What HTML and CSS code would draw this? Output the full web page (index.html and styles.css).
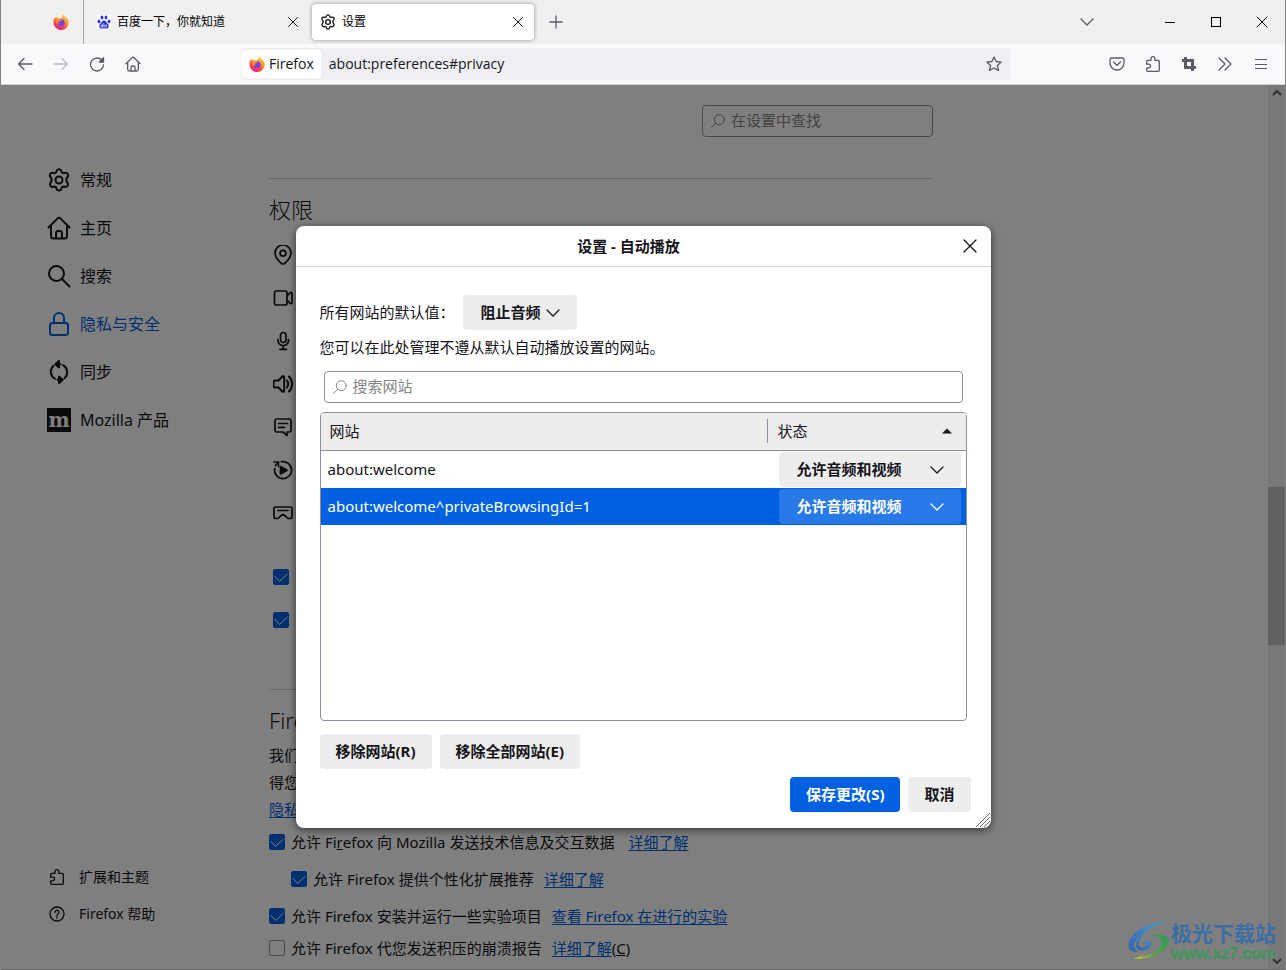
FILE: index.html
```html
<!DOCTYPE html>
<html lang="zh-CN">
<head>
<meta charset="utf-8">
<title>设置</title>
<link rel="stylesheet" href="styles.css">
</head>
<body>
<svg class="defs" aria-hidden="true">
  <defs>
    <linearGradient id="flame" x1="0.8" y1="0" x2="0.3" y2="1">
      <stop offset="0" stop-color="#ffe14a"/><stop offset="0.4" stop-color="#ff9a2b"/><stop offset="0.75" stop-color="#ff3d4d"/><stop offset="1" stop-color="#e31587"/>
    </linearGradient>
    <symbol id="firefox" viewBox="0 0 16 16">
      <path fill="url(#flame)" d="M10 .2c1.300.9 1.900 1.900 2.200 2.800C14.500 4 15.800 6.200 15.800 8.500A7.600 7.600 0 0 1 8.200 16 7.700 7.700 0 0 1 .4 8.300C.4 6.200 1 4.300 2.300 3l.3 1.200L4.200 3l.5 1.400 2.500.1C8.500 4 9.500 2.500 10 .2z"/>
      <path fill="#7542e5" d="M7.600 5.300c2.600-.4 4.300 1.500 4.200 3.600-.1 2.100-1.900 3.500-3.900 3.400-2-.1-3.500-1.600-3.500-3.300 1 .8 2.200.5 3-.1-1-.1-2-.7-2.200-1.500.9.100 1.600-.2 2.400-.8-.5-.3-.4-.9 0-1.300z"/>
      <path fill="#ff9328" d="M3 6c1-1 3-1.200 4.500-.5L8.700 6 7.500 7.200l-2 .4C4.500 8.500 4.500 10 5.200 11 3.500 10.200 2.500 8 3 6z"/>
    </symbol>
    <symbol id="gear" viewBox="0 0 24 24">
      <path d="M9.500 3.200a2.600 2.600 0 0 1 5 0l.4 1.200 1.500.8 1.300-.3a2.600 2.600 0 0 1 2.700 4.300L19.500 10.300v2.900l.9 1.400a2.600 2.600 0 0 1-2.700 4.200l-1.300-.2-1.500.8-.4 1.300a2.600 2.600 0 0 1-5 0l-.4-1.300-1.500-.8-1.300.2a2.600 2.600 0 0 1-2.700-4.200l.9-1.400v-2.900l-.9-1.100a2.600 2.600 0 0 1 2.700-4.300l1.300.3 1.500-.8z"/><circle cx="12" cy="12" r="3.500"/>
    </symbol>
    <symbol id="house" viewBox="0 0 24 24">
      <path d="M1.500 11.500 10.600 2.400a2 2 0 0 1 2.800 0l9.100 9.100M4 9.500V20a2.500 2.500 0 0 0 2.500 2.500h11A2.500 2.500 0 0 0 20 20V9.500M9 22.500V17a2 2 0 0 1 2-2h2a2 2 0 0 1 2 2v5.500"/>
    </symbol>
    <symbol id="puzzle" viewBox="0 0 16 16">
      <path d="M6 4.300V2.600a1.900 1.900 0 0 1 3.800 0v1.700h3.400a1.100 1.100 0 0 1 1.100 1.100v8.800a1.100 1.100 0 0 1-1.100 1.100H2.800a1.100 1.100 0 0 1-1.100-1.100v-2.400h2.100a1.800 1.800 0 0 0 0-3.600H1.700V5.400a1.100 1.100 0 0 1 1.100-1.100z"/>
    </symbol>
    <symbol id="cross" viewBox="0 0 12 12"><path d="m1.500 1.500 9 9m0-9-9 9"/></symbol>
    <symbol id="chevron" viewBox="0 0 14 14"><path d="m1 4 6 6 6-6"/></symbol>
    <symbol id="lens" viewBox="0 0 14 14"><circle cx="8.300" cy="5.700" r="5"/><path d="M4.700 9.300.7 13.300"/></symbol>
  </defs>
</svg>

<header class="tabs">
  <button class="pinned" aria-label="Firefox"><svg class="i16 plain"><use href="#firefox"/></svg></button>
  <div class="tab">
    <svg class="i14 plain" viewBox="0 0 14 14"><rect width="14" height="14" rx="2" fill="#fff"/><g fill="#2932e1"><ellipse cx="2" cy="6.400" rx="1.400" ry="1.900"/><ellipse cx="5" cy="2.600" rx="1.400" ry="2"/><ellipse cx="9" cy="2.600" rx="1.400" ry="2"/><ellipse cx="12" cy="6.400" rx="1.400" ry="1.900"/><path d="M7 5.600c2 0 2.300 2 3.700 3.200 1.800 1.600 1.100 4.800-1.100 4.800-1 0-1.600-.3-2.600-.3s-1.600.3-2.600.3c-2.200 0-2.900-3.200-1.100-4.800C4.700 7.600 5 5.600 7 5.600z"/></g><path stroke="#fff" stroke-width=".8" fill="none" d="M6 8.700v3.300H4.800a.8.8 0 0 1 0-1.700H6M7.700 10v1.500c0 .7 1.800.7 1.800 0V10"/></svg>
    <span class="tab-title">百度一下，你就知道</span>
    <button class="icon-btn" aria-label="关闭标签页"><svg class="i12"><use href="#cross"/></svg></button>
  </div>
  <div class="tab active">
    <svg class="i16 bold"><use href="#gear"/></svg>
    <span class="tab-title">设置</span>
    <button class="icon-btn" aria-label="关闭标签页"><svg class="i12"><use href="#cross"/></svg></button>
  </div>
  <button class="icon-btn new-tab" aria-label="新建标签页"><svg class="i14 muted" viewBox="0 0 14 14"><path d="M7 1v12M1 7h12"/></svg></button>
  <button class="icon-btn all-tabs" aria-label="列出所有标签页"><svg class="i14 muted"><use href="#chevron"/></svg></button>
  <div class="window-controls">
    <button aria-label="最小化"><svg class="i12 crisp" viewBox="0 0 12 12"><path d="M1 6.500h10"/></svg></button>
    <button aria-label="最大化"><svg class="i12 crisp" viewBox="0 0 12 12"><rect x="1.500" y="1.500" width="9" height="9"/></svg></button>
    <button aria-label="关闭"><svg class="i12" viewBox="0 0 12 12"><path d="m1 1 10 10M11 1 1 11"/></svg></button>
  </div>
</header>

<nav class="toolbar" aria-label="导航">
  <div class="nav-buttons">
    <button aria-label="后退"><svg class="i16" viewBox="0 0 16 16"><path d="M15 8H1.500M7 2.500 1.500 8 7 13.500"/></svg></button>
    <button aria-label="前进" disabled><svg class="i16" viewBox="0 0 16 16"><path d="M1 8h13.500M9 2.500 14.500 8 9 13.500"/></svg></button>
    <button aria-label="刷新"><svg class="i16" viewBox="0 0 16 16"><path d="M12.700 4A6.500 6.500 0 1 0 14.500 8.700"/><path class="solid" d="M14.500 1.800V6h-4.200z"/></svg></button>
    <button aria-label="主页"><svg class="i16 bold"><use href="#house"/></svg></button>
  </div>
  <div class="urlbar">
    <span class="identity"><svg class="i16 plain"><use href="#firefox"/></svg>Firefox</span>
    <input class="url" aria-label="地址" value="about:preferences#privacy">
    <button aria-label="添加书签"><svg class="i16" viewBox="0 0 16 16"><path d="m8 .9 2.100 4.600 5.100.6-3.800 3.400 1 5L8 12l-4.400 2.500 1-5L.8 6.100l5.100-.6z"/></svg></button>
  </div>
  <div class="tools">
    <button aria-label="Pocket"><svg class="i16" viewBox="0 0 16 16"><path d="M2.500 2h11a1.500 1.500 0 0 1 1.500 1.500V7A7 7 0 0 1 1 7V3.500A1.500 1.500 0 0 1 2.500 2zM4.500 6 8 9.300 11.500 6"/></svg></button>
    <button aria-label="扩展"><svg class="i16"><use href="#puzzle"/></svg></button>
    <button aria-label="截图"><svg class="i16 crop" viewBox="0 0 16 16"><path d="M1 4.500h10.500V15M4.500 1v10.500H15"/></svg></button>
    <button aria-label="更多工具"><svg class="i16" viewBox="0 0 16 16"><path d="m2 2 6 6-6 6M8 2l6 6-6 6"/></svg></button>
    <button aria-label="菜单"><svg class="i16 crisp" viewBox="0 0 16 16"><path d="M2 3.500h12M2 8.500h12M2 12.500h12"/></svg></button>
  </div>
</nav>

<div class="viewport">
  <div class="page">
    <aside class="sidebar">
      <a href="#general"><svg class="i24"><use href="#gear"/></svg>常规</a>
      <a href="#home"><svg class="i24"><use href="#house"/></svg>主页</a>
      <a href="#search"><svg class="i24" viewBox="0 0 24 24"><circle cx="9.500" cy="9.500" r="7.500"/><path d="m15 15 7.500 7.500"/></svg>搜索</a>
      <a href="#privacy" class="current"><svg class="i24" viewBox="0 0 24 24"><rect x="3" y="11" width="18" height="12" rx="2.500"/><path d="M7 11V6a5 5 0 0 1 10 0v5"/></svg>隐私与安全</a>
      <a href="#sync"><svg class="i24" viewBox="0 0 24 24"><path d="M6.500 5.800a8 8 0 0 0 1.500 13M17.500 18.200a8 8 0 0 0-1.500-13M12 4.200h1.500M12 19.800h-1.500"/><path class="solid" d="M12 1v6.400L8.300 4.200zM12 23v-6.400l3.700 3.200z"/></svg>同步</a>
      <a href="#more"><span class="moz" aria-hidden="true">m</span>Mozilla 产品</a>
      <div class="side-foot">
        <a href="#addons"><svg class="i16"><use href="#puzzle"/></svg>扩展和主题</a>
        <a href="#help"><svg class="i16" viewBox="0 0 16 16"><circle cx="8" cy="8" r="7"/><path d="M6 6.300a2 2 0 1 1 3 1.700c-.7.400-1 .7-1 1.500M8 11v1.200"/></svg>Firefox 帮助</a>
      </div>
    </aside>
    <main class="main">
      <label class="search pref-search"><svg class="i14"><use href="#lens"/></svg><input type="search" placeholder="在设置中查找" aria-label="在设置中查找"></label>
      <section class="group">
        <h2>权限</h2>
        <ul class="perms">
          <li><svg class="i20" viewBox="0 0 20 20"><path d="M10 19c-1 0-8-5.500-8-11a8 8 0 0 1 16 0c0 5.500-7 11-8 11z"/><circle cx="10" cy="8.300" r="2.900"/></svg></li>
          <li><svg class="i20" viewBox="0 0 20 20"><rect x="1.500" y="3" width="12.500" height="14" rx="2"/><path d="m14 8 3-3.200c.8-.8 2-.3 2 .7v9c0 1-1.200 1.500-2 .7L14 12"/></svg></li>
          <li><svg class="i20" viewBox="0 0 20 20"><rect x="7.500" y="1.500" width="5.500" height="10" rx="2.700"/><path d="M5 8.500v1a5.200 5.200 0 0 0 10.500 0v-1M10.200 14.500V18M7 18.300h6.500"/></svg></li>
          <li><svg class="i20 heavy" viewBox="0 0 20 20"><path d="M2 6.500h3.500l3.800-4a1.100 1.100 0 0 1 1.900.8v13.400c0 1-1.200 1.500-1.900.8l-3.800-4H2a1.500 1.500 0 0 1-1.500-1.500V8A1.500 1.500 0 0 1 2 6.500zM14 6.500c1.300 2 1.300 5 0 7M16 2.500c4 4 4 11 0 15"/></svg></li>
          <li><svg class="i20" viewBox="0 0 20 20"><path d="M3.500 2h13A1.800 1.800 0 0 1 18 3.800v9.400a1.800 1.800 0 0 1-1.500 1.800H14v3.500L10 15H3.500A1.800 1.800 0 0 1 2 13.200V3.800A1.800 1.800 0 0 1 3.500 2zM5.500 6.500h9M5.500 10.300h6"/></svg></li>
          <li><svg class="i20" viewBox="0 0 20 20"><path d="M8.500 1.700a8.500 8.500 0 1 1-6.800 7M1 2h4.500v4.500M5.500 2 2.500 5.500"/><path class="solid" d="M7.500 6.500v7.500l6.500-3.700z"/></svg></li>
          <li><svg class="i20" viewBox="0 0 20 20"><path d="M2.500 4h15A1.500 1.500 0 0 1 19 5.500v8a2 2 0 0 1-2 2h-2l-2.800-2.700a3.200 3.200 0 0 0-4.400 0L5 15.500H3a2 2 0 0 1-2-2v-8A1.500 1.500 0 0 1 2.500 4zM5 7.500h10"/></svg></li>
        </ul>
        <div class="perm-check"><input type="checkbox" checked aria-label="阻止弹出式窗口"></div>
        <div class="perm-check"><input type="checkbox" checked aria-label="当网站尝试安装附加组件时警告您"></div>
      </section>
      <section class="group data">
        <h2>Firefox</h2>
        <p>我们力</p>
        <p>得您同</p>
        <p><a href="#notice">隐私声</a></p>
        <div class="check"><label><input type="checkbox" checked>允许 Fi<u>r</u>efox 向 Mozilla 发送技术信息及交互数据</label><a class="far" href="#d1">详细了解</a></div>
        <div class="check sub"><label><input type="checkbox" checked>允许 Firefox 提供个性化扩展推荐</label><a href="#d2">详细了解</a></div>
        <div class="check"><label><input type="checkbox" checked>允许 Firefox 安装并运行一些实验项目</label><a href="#d3">查看 Firefox 在进行的实验</a></div>
        <div class="check last"><label><input type="checkbox">允许 Firefox 代您发送积压的崩溃报告</label><a href="#d4">详细了解</a>(<u>C</u>)</div>
      </section>
    </main>
  </div>

  <div class="overlay">
    <div class="dialog" role="dialog" aria-labelledby="dialog-title">
      <header class="dialog-head">
        <h1 id="dialog-title">设置 - 自动播放</h1>
        <button class="icon-btn" aria-label="关闭"><svg class="i14" viewBox="0 0 14 14"><path d="m1 1 12 12M13 1 1 13"/></svg></button>
      </header>
      <div class="dialog-body">
        <div class="default-row">
          <label for="default">所有网站的默认值：</label>
          <span class="picker compact"><select id="default"><option>阻止音频</option></select><svg class="i14"><use href="#chevron"/></svg></span>
        </div>
        <p class="desc">您可以在此处管理不遵从默认自动播放设置的网站。</p>
        <label class="search site-search"><svg class="i14"><use href="#lens"/></svg><input type="search" placeholder="搜索网站" aria-label="搜索网站"></label>
        <div class="site-list">
          <table>
            <colgroup><col><col class="status-col"></colgroup>
            <thead><tr><th>网站</th><th><div class="status-head">状态<svg class="sort" viewBox="0 0 10 6"><path class="solid" d="M0 5.500 5 .5l5 5z"/></svg></div></th></tr></thead>
            <tbody>
              <tr><td>about:welcome</td><td class="status"><span class="picker"><select aria-label="about:welcome 状态"><option>允许音频和视频</option></select><svg class="i14"><use href="#chevron"/></svg></span></td></tr>
              <tr class="selected"><td>about:welcome^privateBrowsingId=1</td><td class="status"><span class="picker"><select aria-label="私密浏览状态"><option>允许音频和视频</option></select><svg class="i14"><use href="#chevron"/></svg></span></td></tr>
            </tbody>
          </table>
        </div>
        <div class="actions"><button class="btn">移除网站(R)</button><button class="btn">移除全部网站(E)</button></div>
      </div>
      <footer class="dialog-foot"><button class="btn primary">保存更改(S)</button><button class="btn">取消</button></footer>
      <svg class="grip" viewBox="0 0 14 14"><path d="M0 14 14 0M4 14 14 4M8 14l6-6M12 14l2-2"/></svg>
    </div>
  </div>

  <div class="scrollbar" aria-hidden="true">
    <svg class="arrow" viewBox="0 0 10 10"><path d="m1 7 4-4 4 4"/></svg>
    <div class="track"><div class="thumb"></div></div>
    <svg class="arrow" viewBox="0 0 10 10"><path d="m1 3 4 4 4-4"/></svg>
  </div>

  <div class="watermark">
    <svg viewBox="0 0 42 40">
      <defs><linearGradient id="wb" x1="1" y1="0" x2="0" y2="1"><stop offset="0" stop-color="#3ea0d0"/><stop offset="1" stop-color="#3a62a8"/></linearGradient><linearGradient id="wg" x1="1" y1="0" x2="0" y2="1"><stop offset="0" stop-color="#2f9a58"/><stop offset=".6" stop-color="#5a9f4c"/><stop offset="1" stop-color="#d0c23a"/></linearGradient></defs>
      <path fill="url(#wb)" d="M40 1C26 0 8 7 2 18-2 26 2 32 10 31 5 28 5 23 10 17 16 9 27 3 40 1z"/>
      <path fill="url(#wb)" d="M26 6C15 10 8 18 8 25c1 6 9 6 13 2 4-3 4-7-1-7-3 0-5 2-5 4 2-2 5-2 4 0-2 3-8 4-8-1 0-6 7-13 15-17z"/>
      <path fill="url(#wg)" d="M22 15c9-3 19-1 19 5 0 10-17 19-36 18 4-1 7-3 10-5l-1 3c11-3 20-9 20-15 0-4-5-6-12-6z"/>
    </svg>
    <div><div class="wm-name">极光下载站</div><div class="wm-url">www.xz7.com</div></div>
  </div>
</div>
</body>
</html>
```

FILE: styles.css
```css
* { box-sizing: border-box; }

body {
  margin: 0;
  height: 100vh;
  display: flex;
  flex-direction: column;
  overflow: hidden;
  border-left: 1px solid #808080;
  border-right: 1px solid #808080;
  font: 15px/20px "Noto Sans", "Noto Sans CJK SC", sans-serif;
  color: #15141a;
}

button, input, select { font: inherit; color: inherit; border: 0; background: none; padding: 0; margin: 0; outline: none; }
button { display: grid; place-items: center; }
h1, h2, p, ul { margin: 0; padding: 0; font-weight: 400; }
ul { list-style: none; }

svg { flex: none; display: block; fill: none; stroke: currentColor; stroke-width: 1.3; stroke-linecap: round; stroke-linejoin: round; }
.defs { position: absolute; width: 0; height: 0; }
.plain { stroke: none; }
.solid { fill: currentColor; }
.crisp { shape-rendering: crispEdges; stroke-width: 1; stroke-linecap: butt; stroke-linejoin: miter; }
.bold { stroke-width: 2; }
.muted { color: #5b5b66; }
.i12 { width: 12px; height: 12px; stroke-width: 1; }
.i14 { width: 14px; height: 14px; }
.i16 { width: 16px; height: 16px; }
.i16.bold { stroke-width: 2; }
.i20 { width: 20px; height: 20px; stroke-width: 1.700; }
.i20.heavy { stroke-width: 2; }
.i24 { width: 24px; height: 24px; stroke-width: 2; }

/* Tab strip */
.tabs { display: flex; align-items: center; height: 44px; flex: none; background: #f0f0f0; font-size: 12px; }
.pinned { width: 83px; height: 44px; padding-left: 37px; border-right: 1px solid #a8a8a8; }
.tab { display: flex; align-items: center; gap: 6px; width: 222px; height: 36px; padding: 0 3px 0 13px; margin-right: 6px; }
.tab.active { padding: 0 6px 0 8px; margin: 0; background: #fff; border-radius: 4px; box-shadow: 0 0 4px rgba(0, 0, 0, .4); }
.tab-title { flex: 1; white-space: nowrap; color: #000; }
.icon-btn { width: 20px; height: 20px; }
.new-tab { margin-left: 12px; }
.all-tabs { margin-left: auto; }
.window-controls { display: flex; margin: 0 0 0 50px; color: #000; }
.window-controls button { width: 46px; height: 44px; }

/* Navigation toolbar */
.toolbar { display: flex; align-items: center; height: 41px; flex: none; background: #f9f9fb; border-bottom: 1px solid #ccc; color: #5b5b66; }
.toolbar button { width: 36px; height: 32px; flex: none; }
.toolbar button:disabled { color: #bcbcc2; }
.nav-buttons { display: flex; width: 240px; padding-left: 6px; }
.urlbar { display: flex; align-items: center; flex: 1; height: 32px; background: #f0f0f4; border-radius: 4px; color: #15141a; font-family: "Open Sans", sans-serif; font-size: 14px; }
.urlbar button { width: 32px; color: #5b5b66; }
.identity { display: flex; align-items: center; gap: 4px; height: 28px; margin-left: 1px; padding: 0 7px; border-radius: 3px; background: #fff; }
.url { flex: 1; min-width: 0; padding: 0 8px; }
.tools { display: flex; margin-left: 89px; padding-right: 6px; }
.crop { stroke-width: 3; stroke-linecap: butt; stroke-linejoin: miter; }

/* Preferences page */
.viewport { position: relative; flex: 1; min-height: 0; overflow: hidden; border-bottom: 1px solid #6b6b6b; }
.page { display: flex; height: 100%; background: #fff; }
.sidebar { display: flex; flex-direction: column; width: 268px; flex: none; padding: 71px 0 37px 46px; font-size: 16px; }
.sidebar a { display: flex; align-items: center; gap: 9px; height: 48px; color: inherit; text-decoration: none; }
.sidebar a.current { color: #0061e0; }
.moz { display: grid; place-items: center; width: 24px; height: 24px; background: #15141a; color: #fff; font: bold 20px/24px "DejaVu Serif", serif; }
.side-foot { margin-top: auto; padding-left: 2px; font-size: 14px; }
.side-foot a { height: 37px; gap: 14px; }

.main { display: flex; flex-direction: column; flex: 0 1 664px; min-width: 0; padding-top: 20px; white-space: nowrap; }
.search { display: flex; align-items: center; gap: 6px; height: 32px; padding: 0 8px; border: 1px solid #8f8f9d; border-radius: 4px; background: #fff; color: #858585; }
.search svg { stroke-width: 1; }
.search input { flex: 1; min-width: 0; padding-bottom: 2px; appearance: none; }
.search input::placeholder { color: #858585; opacity: 1; }
.pref-search { width: 231px; align-self: flex-end; margin-bottom: 41px; }
.group { border-top: 1px solid #d0d0d4; padding-top: 15px; }
.group h2 { font-size: 22px; line-height: 30px; font-weight: 300; margin-bottom: 9px; }
.perms { margin-bottom: 21px; padding-left: 4px; }
.perms li { height: 43px; display: flex; align-items: center; }
.perm-check { height: 43px; display: flex; align-items: center; padding-left: 4px; }
.data { margin-top: 48px; }
.data h2 { margin-bottom: 7px; }
.data p { line-height: 27px; }
.data a { color: #0061e0; text-decoration: underline; text-underline-offset: 2px; }

input[type="checkbox"] { appearance: none; width: 16px; height: 16px; flex: none; border: 1px solid #8f8f9d; border-radius: 2px; }
input[type="checkbox"]:checked { border-color: #0061e0; background: #0061e0 url("data:image/svg+xml,%3Csvg xmlns='http://www.w3.org/2000/svg' viewBox='0 0 14 14'%3E%3Cpath d='m.5 6 5 5.500 8-7.500' fill='none' stroke='white' stroke-width='1'/%3E%3C/svg%3E"); }
.check { display: flex; align-items: center; height: 37px; }
.check label { display: flex; align-items: center; white-space: pre; margin-right: 10px; }
.check input { margin-right: 6px; }
.check .far { margin-left: 4px; }
.check.sub { padding-left: 22px; }
.check.last { height: 28px; }

/* Modal dialog */
.overlay { position: absolute; inset: 0; display: grid; place-items: center; background: rgba(0, 0, 0, .5); }
.dialog { position: relative; width: 695px; max-width: 100%; background: #fff; border-radius: 8px; box-shadow: 0 2px 8px rgba(0, 0, 0, .6); }
.dialog-head { display: flex; align-items: center; height: 41px; padding: 0 11px 0 2px; border-bottom: 1px solid #d0d0d4; }
.dialog-head h1 { flex: 1; text-align: center; font-size: 15px; font-weight: 700; }
.dialog-body { padding: 28px 24px 0; }
.default-row { display: flex; align-items: center; gap: 8px; }
.default-row label { padding-bottom: 2px; }
.picker { display: grid; align-items: center; background: #ededee; border-radius: 4px; color: #15141a; font-weight: 700; }
.picker > * { grid-area: 1 / 1; }
.picker select { width: 100%; height: 35px; padding: 0 42px 2px 18px; appearance: none; }
.picker svg { justify-self: end; margin-right: 17px; pointer-events: none; }
.picker.compact select { padding-right: 35px; }
.desc { padding: 7px 0 14px; }
.site-search { margin: 0 4px 9px; }
.site-list { min-height: 309px; border: 1px solid #8f8f9d; border-radius: 4px; overflow: hidden; }
table { width: 100%; border-collapse: separate; border-spacing: 0; table-layout: fixed; }
.status-col { width: 199px; }
th { height: 38px; padding: 0 9px 2px; text-align: left; font-weight: 400; background: #ededee; border-bottom: 1px solid #8f8f9d; }
.status-head { display: flex; align-items: center; justify-content: space-between; height: 24px; padding: 0 5px 0 10px; border-left: 1px solid #8f8f9d; }
th + th { padding-left: 0; }
.sort { width: 10px; height: 6px; stroke: none; }
td { height: 37px; padding: 0 7px 2px; }
td.status { padding: 0 5px 0 12px; }
.selected { background: #0061e0; color: #fff; }
.selected .picker { background: #2679e6; color: #fff; }
.actions { display: flex; gap: 8px; margin-top: 13px; }
.btn { height: 35px; padding: 0 16px 2px; border-radius: 4px; background: #ededee; font-weight: 700; }
.btn.primary { background: #0061e0; color: #fff; }
.dialog-foot { display: flex; justify-content: flex-end; gap: 8px; padding: 8px 20px 16px; }
.grip { position: absolute; right: 1px; bottom: 1px; width: 14px; height: 14px; stroke-width: 1; color: #666; }

.scrollbar { position: absolute; top: 0; right: 0; bottom: 0; width: 17px; display: flex; flex-direction: column; align-items: center; gap: 4px; padding: 3px 0; background: #787878; color: #303030; }
.arrow { width: 10px; height: 10px; stroke-width: 2; stroke-linecap: butt; }
.track { flex: 1; width: 100%; display: grid; grid-template-rows: 386fr 158fr 308fr; }
.thumb { grid-row: 2; background: #606060; }

.watermark { position: absolute; right: 9px; bottom: 6px; display: flex; align-items: center; gap: 1px; color: #3a6ea5; white-space: nowrap; }
.watermark svg { width: 42px; height: 40px; stroke: none; }
.wm-name { font: bold 21px/26px "Noto Sans CJK SC", sans-serif; }
.wm-url { font: bold 16px/18px "Liberation Sans", sans-serif; color: #38985a; }
```
